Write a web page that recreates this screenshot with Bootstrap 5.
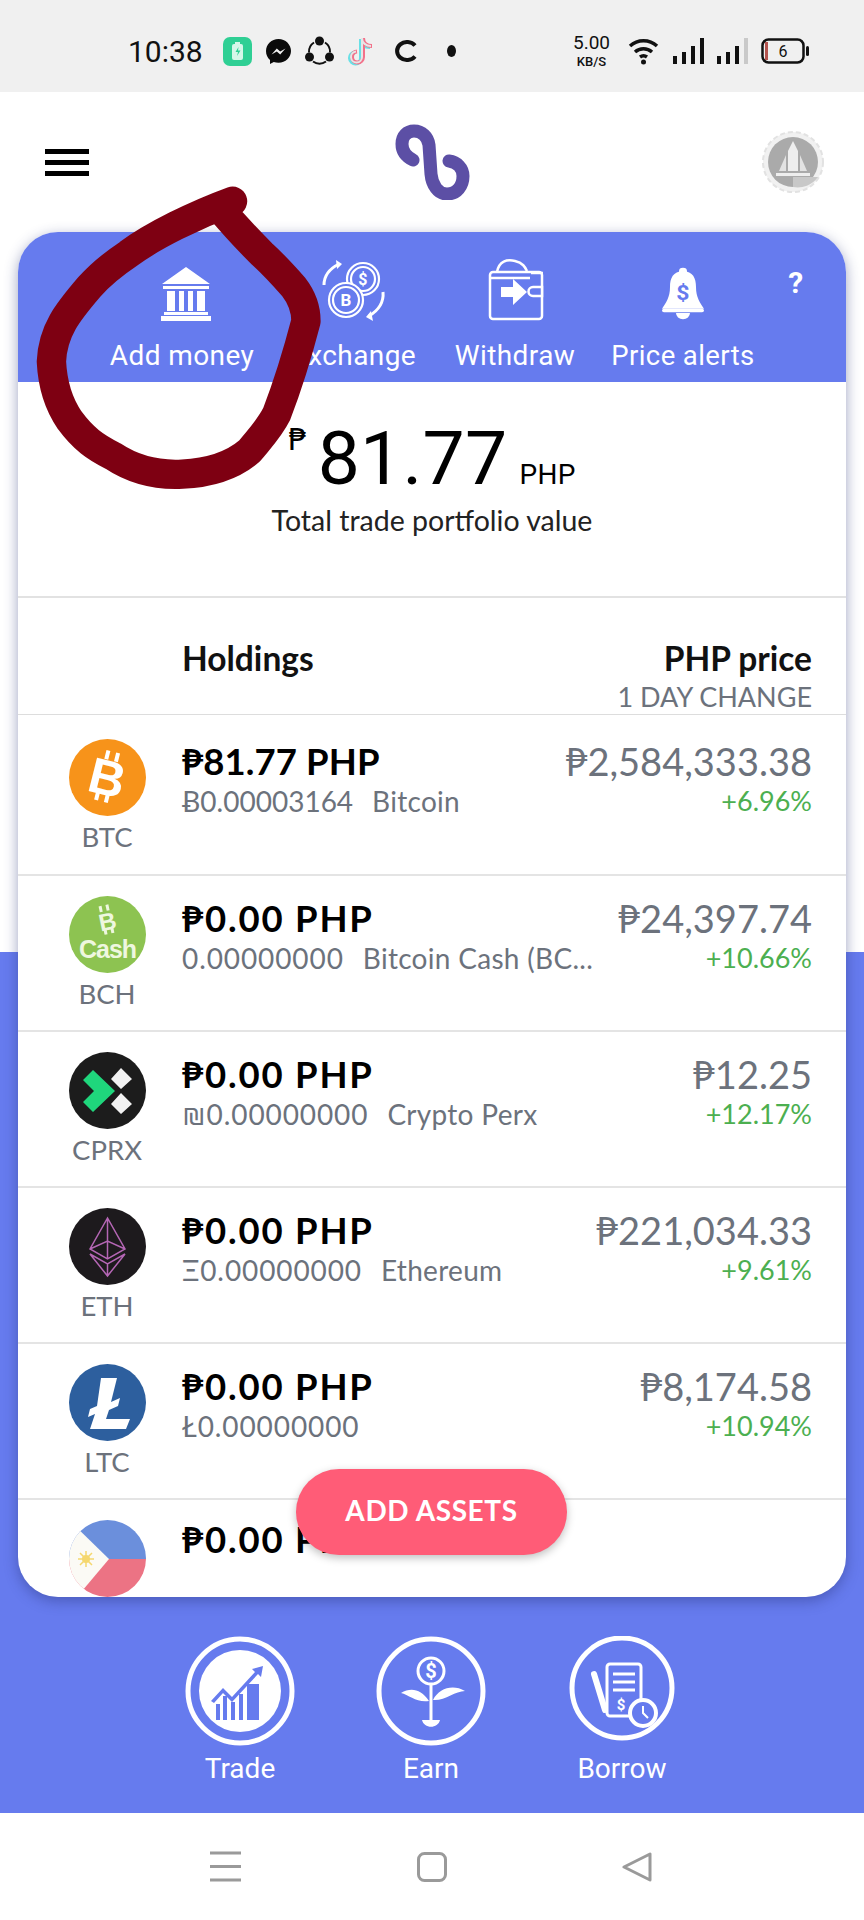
<!DOCTYPE html>
<html lang="en">
<head>
    <meta charset="UTF-8">
    <meta name="viewport" content="width=device-width, initial-scale=1.0">
    <title>Portfolio</title>
    <link href="https://cdn.jsdelivr.net/npm/bootstrap@5.3.0/dist/css/bootstrap.min.css" rel="stylesheet">
    <style>
        body {
            width: 864px;
            height: 1920px;
            overflow: hidden;
            position: relative;
            font-family: "Lato", "DejaVu Sans", sans-serif;
            background: #fff;
        }
        .status-strip {
            height: 92px;
            background: #f0f0f0;
            padding: 10px 55px 0 128px;
        }
        .status-left { gap: 14px; }
        .status-time { font: 400 30px "Roboto", sans-serif; color: #111; margin-right: 6px; }
        .net-speed { font: 400 19px/22px "Roboto", sans-serif; color: #111; text-align: center; width: 41px; }
        .net-speed span { font-size: 13px; line-height: 16px; display: block; font-weight: 500; }
        .app-area {
            height: 1721px;
            background: linear-gradient(#fff 860px, #667bee 860px);
        }
        .top-head { height: 140px; padding: 0 40px 0 45px; }
        .burger { width: 44px; display: grid; gap: 6px; }
        .burger i { height: 5px; background: #000; display: block; }
        .logo-mark { margin-left: 14px; }
        .main-panel {
            height: 1365px;
            margin: 0 18px;
            border-radius: 40px;
            background: #fff;
            overflow: hidden;
            position: relative;
            box-shadow: 0 4px 14px rgba(40, 50, 120, .45);
        }
        .tab-strip {
            height: 150px;
            background: #667bee;
            color: #fff;
            display: grid;
            grid-template-columns: 172px 172px 150px 186px 40px;
            padding-left: 78px;
            font-family: "Roboto", sans-serif;
            font-size: 28px;
            letter-spacing: .4px;
        }
        .tab-item { text-align: center; white-space: nowrap; padding-top: 26px; }
        .tab-item svg { display: block; margin: 0 auto 11px; height: 66px; }
        .tab-item .bank-ico { margin-left: calc(50% - 24px); }
        .tab-item.tab-alerts { font-size: 27.500px; }
        .tab-help { font-size: 30px; font-weight: 700; padding-top: 28px; text-align: center; }
        .total-box { height: 216px; border-bottom: 2px solid #e2e2e2; text-align: center; color: #000; padding-top: 20px; font-family: "Roboto", sans-serif; }
        .total-num { font-size: 75px; line-height: 76px; letter-spacing: .3px; }
        .total-sign { font-size: 30px; vertical-align: 34px; margin-right: 10px; font-family: "DejaVu Sans", sans-serif; }
        .total-cur { font-size: 28px; margin-left: 12px; }
        .total-cap { font: 400 28.500px/34px "Lato", sans-serif; color: #222; margin-top: -10px; }
        .list-head { height: 117px; padding: 0 34px 0 164px; border-bottom: 1px solid #ddd; color: #111; }
        .head-main { font-size: 33.500px; font-weight: 700; line-height: 38px; padding-top: 41px; }
        .head-sub { font-size: 27px; line-height: 31px; color: #6c727c; padding-top: 4px; }
        .coin-row { height: 156px; border-bottom: 2px solid #e4e4e4; padding: 20px 34px 0 19px; display: flex; }
        .coin-row.first-row { height: 161px; padding-top: 24px; }
        .coin-left { width: 140px; margin-right: 5px; flex: none; text-align: center; color: #6c727c; font-size: 27.500px; line-height: 34px; }
        .coin-left svg { display: block; margin: 0 auto 4px; }
        .coin-amt { font-size: 36.500px; font-weight: 700; color: #000; line-height: 44px; white-space: nowrap; letter-spacing: 1.800px; }
        .coin-row.last-row .coin-amt { margin-top: -3px; }
        .coin-sub { font-size: 28px; line-height: 36px; color: #6c727c; white-space: nowrap; letter-spacing: .9px; }
        .coin-sub span { margin-left: 19px; letter-spacing: .3px; }
        .first-row .coin-amt { letter-spacing: .1px; }
        .first-row .coin-sub { letter-spacing: 0; }
        .coin-price { font-size: 38px; line-height: 44px; color: #6c727c; text-align: right; white-space: nowrap; }
        .coin-pct { font-size: 27px; line-height: 36px; color: #4caf50; text-align: right; }
        .add-btn {
            position: absolute;
            left: 278px;
            bottom: 42px;
            width: 271px;
            height: 86px;
            border-radius: 43px;
            border: 0;
            padding-bottom: 5px;
            background: #ff5c77;
            color: #fff;
            font-size: 28px;
            font-weight: 700;
            letter-spacing: .6px;
            box-shadow: 0 3px 8px rgba(0, 0, 0, .25);
        }
        .action-strip { height: 216px; color: #fff; font: 400 28px "Roboto", sans-serif; padding: 39px 0 0 185px; gap: 81px; }
        .action-item { width: 110px; text-align: center; white-space: nowrap; }
        .action-item svg { display: block; margin-bottom: 6px; }
        .sys-nav { height: 107px; background: #fff; padding: 0 212px 0 210px; }
        .scribble { position: absolute; left: 0; top: 0; pointer-events: none; }
    </style>
</head>
<body>
    <div class="status-strip d-flex align-items-center justify-content-between">
        <div class="status-left d-flex align-items-center">
            <span class="status-time">10:38</span>
            <svg width="29" height="29" viewBox="0 0 29 29"><rect width="29" height="29" rx="7" fill="#2fcf94"/><rect x="9" y="7" width="11" height="16" rx="2" fill="#d6f7e9"/><rect x="12" y="5" width="5" height="2" fill="#d6f7e9"/><path d="M15.500 10l-3 5h2.500l-1 4 3.500-5.500h-2.500z" fill="#2fcf94"/></svg>
            <svg width="25" height="25" viewBox="0 0 25 25"><path d="M12.500 0C5.500 0 0 5 0 12c0 3.700 1.500 6.900 4 9v4l3.800-2.100c1.400.5 3 .8 4.700.8 7 0 12.500-5.300 12.500-11.700S19.500 0 12.500 0z" fill="#0a0a0a"/><path d="M5.500 15.500l5.300-6 3.400 2.900 5.300-3-5.300 6-3.400-2.900z" fill="#f0f0f0"/></svg>
            <svg width="29" height="30" viewBox="0 0 29 30" fill="none"><path d="M9 6.500a11 11 0 0 0-5 10M20 6.500a11 11 0 0 1 5 10M8 25.500a11 11 0 0 0 13 0" stroke="#111" stroke-width="2"/><circle cx="14.500" cy="5" r="4.500" fill="#111"/><circle cx="4.500" cy="21" r="4.500" fill="#111"/><circle cx="24.500" cy="21" r="4.500" fill="#111"/></svg>
            <svg width="28" height="32" viewBox="0 0 28 32" fill="none" stroke-width="4"><path d="M14 3v19a5.500 5.500 0 1 1-6-5.500M14 3c0 5 4 8 9 8" stroke="#69e0e6" transform="translate(-1 1)"/><path d="M14 3v19a5.500 5.500 0 1 1-6-5.500M14 3c0 5 4 8 9 8" stroke="#f3718a" transform="translate(1 0)"/><path d="M14 3v19a5.500 5.500 0 1 1-6-5.500M14 3c0 5 4 8 9 8" stroke="#e6e6e6" stroke-width="2"/></svg>
            <svg width="27" height="22" viewBox="0 0 27 22" fill="none"><path d="M25 5.500A10 9 0 1 0 25 16.500" stroke="#111" stroke-width="4"/></svg>
            <svg width="9" height="18" viewBox="0 0 9 18" class="ms-3"><ellipse cx="4.500" cy="9" rx="4.500" ry="6" fill="#111"/></svg>
        </div>
        <div class="d-flex align-items-center gap-2">
            <div class="net-speed">5.00<span>KB/S</span></div>
            <svg class="ms-2" width="33" height="28" viewBox="0 0 33 28" fill="none" stroke="#111" stroke-width="3.500"><path d="M2 9a20 20 0 0 1 27 0M7 15a13 13 0 0 1 17 0M12 20a6 6 0 0 1 7 0"/><circle cx="15.500" cy="25" r="2.500" fill="#111" stroke="none"/></svg>
            <svg class="ms-1" width="32" height="28" viewBox="0 0 32 28" fill="#111"><rect x="0" y="19" width="4" height="8"/><rect x="9" y="15" width="4" height="12"/><rect x="18" y="9" width="4" height="18"/><rect x="27" y="1" width="4" height="26"/></svg>
            <svg class="ms-1" width="32" height="28" viewBox="0 0 32 28" fill="#111"><rect x="0" y="19" width="4" height="8"/><rect x="9" y="15" width="4" height="12"/><rect x="18" y="9" width="4" height="18"/><rect x="27" y="1" width="4" height="26" fill="#c9c9c9"/></svg>
            <svg class="ms-1" width="48" height="26" viewBox="0 0 48 26" fill="none"><rect x="1.500" y="1.500" width="41" height="23" rx="6" stroke="#111" stroke-width="2.500"/><rect x="4" y="4" width="3" height="18" fill="#b4534e"/><rect x="45" y="8" width="3" height="10" rx="1.500" fill="#111"/><text x="22" y="19" font-family="Roboto" font-size="16" text-anchor="middle" fill="#111">6</text></svg>
        </div>
    </div>

    <div class="app-area">
        <div class="top-head d-flex align-items-center justify-content-between">
            <div class="burger"><i></i><i></i><i></i></div>
            <svg width="76" height="76" viewBox="0 0 76 76" fill="none" class="logo-mark"><path d="M18 36C10 32 7 26 7 20 7 12 12 7 19 7c8 0 14 6 15 14l2 29c1 11 7 20 16 20 10 0 16-8 16-18 0-8-6-14-14-15" stroke="#5c4fa5" stroke-width="13" stroke-linecap="round"/></svg>
            <svg width="62" height="62" viewBox="0 0 62 62"><circle cx="31" cy="31" r="30" fill="#f1f1f1" stroke="#e2e2e2" stroke-width="2" stroke-dasharray="5 3"/><circle cx="31" cy="31" r="25" fill="#aaa"/><path d="M31 10l5 10v20H26V20z" fill="#eee"/><path d="M24 24v16h-7zM38 24v16h7z" fill="#e2e2e2"/><rect x="14" y="42" width="34" height="3" fill="#eee"/><path d="M31 46h25a25 25 0 0 1-25 10z" fill="#c8c8c8"/></svg>
        </div>

        <div class="main-panel">
            <div class="tab-strip">
                <div class="tab-item">
                    <svg class="bank-ico" width="56" viewBox="0 0 56 66" fill="#fff"><path d="M28 9L52 26H4zM5 28h46v3H5zM9 33h8v20H9zM21 33h5v20h-5zM30 33h5v20h-5zM39 33h8v20h-8zM6 54h44v3H6zM3 58h50v5H3z"/></svg>
                    Add money
                </div>
                <div class="tab-item">
                    <svg width="66" viewBox="0 0 66 66" fill="none" stroke="#fff" stroke-width="2.200"><circle cx="42" cy="21" r="16"/><circle cx="42" cy="21" r="12"/><circle cx="25" cy="42" r="17" fill="#667bee"/><circle cx="25" cy="42" r="13"/><text x="42" y="27" font-family="Roboto" font-size="16" font-weight="700" fill="#fff" stroke="none" text-anchor="middle">$</text><text x="25" y="48" font-family="Roboto" font-size="17" font-weight="700" fill="#fff" stroke="none" text-anchor="middle">B</text><path d="M3 27C3 17 8 11 18 6M62 34c1 11-4 18-14 24" stroke-width="3"/><path d="M15 2l6 4-5 5zM52 63l-7-4 5-6z" fill="#fff" stroke="none"/></svg>
                    Exchange
                </div>
                <div class="tab-item">
                    <svg width="57" viewBox="0 0 57 66" fill="none" stroke="#fff" stroke-width="2.500"><path d="M10 14C12 3 20 1 28 3c8 2 10 6 12 10M44 15h12"/><path d="M6 14h46a3 3 0 0 1 3 3v41a3 3 0 0 1-3 3H6a3 3 0 0 1-3-3V17a3 3 0 0 1 3-3z"/><path d="M3 20h40"/><path d="M46 29h9v9h-9a4.500 4.500 0 0 1 0-9z" fill="#667bee"/><path d="M14 29h12V21l14 13-14 13v-8H14z" fill="#fff" stroke="none"/></svg>
                    Withdraw
                </div>
                <div class="tab-item tab-alerts">
                    <svg width="42" viewBox="0 0 42 66"><g transform="translate(0 9) scale(1 .87)"><circle cx="21" cy="5" r="4" fill="#fff"/><path d="M21 5c10 0 13 8 13 18 0 12 4 18 8 25H0c4-7 8-13 8-25C8 13 11 5 21 5z" fill="#fff"/><rect x="0" y="48" width="42" height="4" rx="2" fill="#fff"/><path d="M14 53h14a7 7 0 0 1-14 0z" fill="#fff"/><text x="21" y="38" font-family="Roboto" font-size="23" font-weight="700" fill="#667bee" text-anchor="middle">$</text></g></svg>
                    Price alerts
                </div>
                <div class="tab-help">?</div>
            </div>

            <div class="total-box">
                <div class="total-num"><span class="total-sign">₱</span>81.77<span class="total-cur">PHP</span></div>
                <div class="total-cap">Total trade portfolio value</div>
            </div>

            <div class="list-head d-flex justify-content-between">
                <div class="head-main">Holdings</div>
                <div class="text-end">
                    <div class="head-main">PHP price</div>
                    <div class="head-sub">1 DAY CHANGE</div>
                </div>
            </div>

            <div class="coin-row first-row">
                <div class="coin-left">
                    <svg width="77" height="77" viewBox="0 0 77 77"><circle cx="38.500" cy="38.500" r="38.500" fill="#f7931a"/><g transform="rotate(14 38 38)" fill="#fff"><text x="38.500" y="56" font-family="Liberation Sans" font-size="50" font-weight="700" text-anchor="middle">B</text><rect x="31" y="12" width="4" height="9"/><rect x="41" y="12" width="4" height="9"/><rect x="31" y="54" width="4" height="9"/><rect x="41" y="54" width="4" height="9"/></g></svg>
                    BTC
                </div>
                <div class="flex-grow-1">
                    <div class="coin-amt">₱81.77 PHP</div>
                    <div class="coin-sub">Ƀ0.00003164<span>Bitcoin</span></div>
                </div>
                <div>
                    <div class="coin-price">₱2,584,333.38</div>
                    <div class="coin-pct">+6.96%</div>
                </div>
            </div>
            <div class="coin-row">
                <div class="coin-left">
                    <svg width="77" height="77" viewBox="0 0 77 77"><circle cx="38.500" cy="38.500" r="38.500" fill="#8dc351"/><g fill="#eef7df"><text x="38.500" y="34" font-family="Liberation Sans" font-size="24" font-weight="700" text-anchor="middle" transform="rotate(-12 38 26)">B</text><rect x="33" y="9" width="3" height="6" transform="rotate(-12 38 26)"/><rect x="40" y="9" width="3" height="6" transform="rotate(-12 38 26)"/><rect x="33" y="33" width="3" height="5" transform="rotate(-12 38 26)"/><rect x="40" y="33" width="3" height="5" transform="rotate(-12 38 26)"/><text x="38.500" y="62" font-family="Liberation Sans" font-size="25" font-weight="700" text-anchor="middle" letter-spacing="-1">Cash</text></g></svg>
                    BCH
                </div>
                <div class="flex-grow-1">
                    <div class="coin-amt">₱0.00 PHP</div>
                    <div class="coin-sub">0.00000000<span>Bitcoin Cash (BC...</span></div>
                </div>
                <div>
                    <div class="coin-price">₱24,397.74</div>
                    <div class="coin-pct">+10.66%</div>
                </div>
            </div>
            <div class="coin-row">
                <div class="coin-left">
                    <svg width="77" height="77" viewBox="0 0 77 77"><circle cx="38.500" cy="38.500" r="38.500" fill="#1c1c1c"/><path d="M14 28l10-10 22 21-22 21-10-10 11-11z" fill="#1fd67c"/><path d="M42 27l10-11 11 11-11 10zM42 52l10-11 11 11-11 10z" fill="#f2f2f2"/></svg>
                    CPRX
                </div>
                <div class="flex-grow-1">
                    <div class="coin-amt">₱0.00 PHP</div>
                    <div class="coin-sub">₪0.00000000<span>Crypto Perx</span></div>
                </div>
                <div>
                    <div class="coin-price">₱12.25</div>
                    <div class="coin-pct">+12.17%</div>
                </div>
            </div>
            <div class="coin-row">
                <div class="coin-left">
                    <svg width="77" height="77" viewBox="0 0 77 77"><circle cx="38.500" cy="38.500" r="38.500" fill="#1d1a1d"/><g fill="none" stroke="#b466b4" stroke-width="1.500"><path d="M38.500 10L21 41l17.500 10L56 41zM38.500 10v41M21 41l17.500-8L56 41"/><path d="M21 46l17.500 22L56 46l-17.500 10zM38.500 56v12"/></g></svg>
                    ETH
                </div>
                <div class="flex-grow-1">
                    <div class="coin-amt">₱0.00 PHP</div>
                    <div class="coin-sub">Ξ0.00000000<span>Ethereum</span></div>
                </div>
                <div>
                    <div class="coin-price">₱221,034.33</div>
                    <div class="coin-pct">+9.61%</div>
                </div>
            </div>
            <div class="coin-row">
                <div class="coin-left">
                    <svg width="77" height="77" viewBox="0 0 77 77"><circle cx="38.500" cy="38.500" r="38.500" fill="#2d5f9e"/><path d="M32 14h16l-6 24 9-4-2 8-9 4-3 9h24l-4 10H21l5-15-7 3 2-8 7-3z" fill="#fff"/></svg>
                    LTC
                </div>
                <div class="flex-grow-1">
                    <div class="coin-amt">₱0.00 PHP</div>
                    <div class="coin-sub">Ł0.00000000</div>
                </div>
                <div>
                    <div class="coin-price">₱8,174.58</div>
                    <div class="coin-pct">+10.94%</div>
                </div>
            </div>
            <div class="coin-row last-row">
                <div class="coin-left">
                    <svg width="77" height="77" viewBox="0 0 77 77"><defs><clipPath id="flagClip"><circle cx="38.500" cy="38.500" r="38.500"/></clipPath></defs><g clip-path="url(#flagClip)"><rect width="77" height="39" fill="#6b8fdc"/><rect y="39" width="77" height="38" fill="#ec7384"/><path d="M0 0l40 39L8 77H0z" fill="#fbfaf5"/><circle cx="17" cy="39" r="4" fill="#f5d76e"/><path d="M17 31v16M9 39h16M11 33l12 12M23 33L11 45" stroke="#f5d76e" stroke-width="1.500"/></g></svg>
                </div>
                <div class="flex-grow-1">
                    <div class="coin-amt">₱0.00 PHP</div>
                </div>
            </div>
            <button class="add-btn" type="button">ADD ASSETS</button>
        </div>

        <div class="action-strip d-flex align-items-start">
            <div class="action-item">
                <svg width="110" height="110" viewBox="0 0 110 110" fill="none"><circle cx="55" cy="55" r="52" stroke="#fff" stroke-width="5"/><circle cx="55" cy="55" r="41" fill="#fff"/><path d="M26 65l12-13 9 9 23-25-3-3 11-3-2 11-3-3-26 28-9-9-9 10z" fill="#667bee"/><path d="M31 68h4v16h-4zM38 60h4v24h-4zM46 66h4v18h-4zM54 58h4v26h-4zM62 48h12v36H62z" fill="#667bee"/></svg>
                Trade
            </div>
            <div class="action-item">
                <svg width="110" height="110" viewBox="0 0 110 110" fill="none"><circle cx="55" cy="55" r="52" stroke="#fff" stroke-width="5"/><circle cx="55" cy="35" r="13" stroke="#fff" stroke-width="3"/><text x="55" y="42" font-family="Roboto" font-size="20" font-weight="700" fill="#fff" text-anchor="middle">$</text><path d="M55 48v38" stroke="#fff" stroke-width="3"/><path d="M53 65c-8-12-18-14-28-8 8 2 16 10 28 8zM57 64c6-12 20-16 32-9-10 0-20 10-32 9zM46 84h18c-2 9-16 9-18 0z" fill="#fff"/></svg>
                Earn
            </div>
            <div class="action-item">
                <svg width="110" height="110" viewBox="0 0 110 110" fill="none"><circle cx="55" cy="52" r="50" stroke="#fff" stroke-width="5"/><rect x="40" y="28" width="34" height="52" rx="3" stroke="#fff" stroke-width="3"/><path d="M46 38h22M46 46h22M46 54h22" stroke="#fff" stroke-width="3"/><path d="M27 38l11 36" stroke="#fff" stroke-width="6" stroke-linecap="round"/><text x="54" y="74" font-family="Roboto" font-size="15" font-weight="700" fill="#fff" text-anchor="middle">$</text><circle cx="76" cy="77" r="13" fill="#667bee" stroke="#fff" stroke-width="4"/><path d="M76 70v7l5 5" stroke="#fff" stroke-width="2"/></svg>
                Borrow
            </div>
        </div>
    </div>

    <div class="sys-nav d-flex align-items-center justify-content-between">
        <svg width="31" height="31" viewBox="0 0 31 31" fill="none" stroke="#9a9a9a" stroke-width="3"><path d="M0 2h31M0 15.500h31M0 29h31"/></svg>
        <svg width="30" height="30" viewBox="0 0 30 30" fill="none" stroke="#9a9a9a" stroke-width="3"><rect x="1.500" y="1.500" width="27" height="27" rx="6"/></svg>
        <svg width="30" height="30" viewBox="0 0 30 30" fill="none" stroke="#9a9a9a" stroke-width="3" stroke-linejoin="round"><path d="M28 2v26L2 15z"/></svg>
    </div>

    <svg class="scribble" width="864" height="1920" viewBox="0 0 706 1568" fill="none"><path d="M190 164C160 175 125 192 105 207 90 217 82 224 73 234 55 255 43 270 42 295 43 315 48 330 57 343 68 358 78 365 92 372 110 384 130 388 149 387 170 386 190 380 204 368 212 358 220 350 226 338 236 312 244 285 250 262 250 252 247 243 240 234 232 225 224 216 214 207 202 195 190 182 180 170" stroke="#7e0012" stroke-width="24" stroke-linecap="round" stroke-linejoin="round"/></svg>
</body>
</html>
